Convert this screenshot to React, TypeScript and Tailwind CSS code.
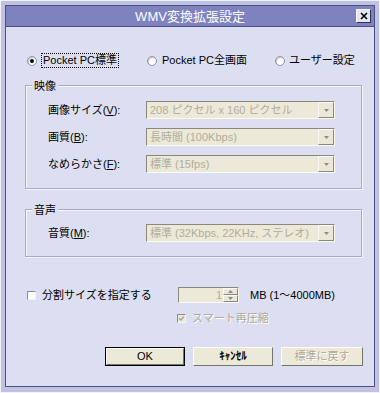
import React from "react";

const FONT = "font-['Liberation_Sans','Noto_Sans_CJK_JP',sans-serif]";

function Radio({ checked }: { checked?: boolean }) {
  return (
    <span className="flex h-[10px] w-[10px] shrink-0 items-center justify-center rounded-full border border-[#8d8fa6] bg-white shadow-[inset_1px_1px_1px_#c8c8d0]">
      {checked && <span className="h-[4px] w-[4px] rounded-full bg-black" />}
    </span>
  );
}

function Check({ disabled, checked }: { disabled?: boolean; checked?: boolean }) {
  return (
    <span
      className={`flex h-[9px] w-[9px] shrink-0 items-center justify-center border border-t-[#8a8a9a] border-l-[#8a8a9a] border-r-[#f4f4f8] border-b-[#f4f4f8] ${disabled ? "bg-[#ece9d8]" : "bg-white"}`}
    >
      {checked && (
        <svg width="7" height="7" viewBox="0 0 7 7">
          <path d="M1 3.2 L2.8 5 L6 1.5" fill="none" stroke="#a8a594" strokeWidth="1.4" />
        </svg>
      )}
    </span>
  );
}

function Arrow({ up, color = "#8e8c82" }: { up?: boolean; color?: string }) {
  return (
    <svg width="5" height="3" viewBox="0 0 5 3">
      <path d={up ? "M0 3 L2.5 0 L5 3 Z" : "M0 0 L5 0 L2.5 3 Z"} fill={color} />
    </svg>
  );
}

function Combo({ text }: { text: string }) {
  return (
    <div className="flex h-[18px] w-[189px] items-stretch border border-t-[#8a877c] border-l-[#8a877c] border-r-[#fbfaf4] border-b-[#fbfaf4] bg-[#ece9d8]">
      <div className="flex flex-1 items-center overflow-hidden whitespace-nowrap pl-[3px] text-[11px] text-[#b0ad9d]">{text}</div>
      <div className="flex w-[16px] items-center justify-center border border-t-[#fbfaf4] border-l-[#fbfaf4] border-r-[#8a877c] border-b-[#8a877c] bg-[#ebe8d9]">
        <Arrow />
      </div>
    </div>
  );
}

function Row({ label, mn, rest, value }: { label: string; mn: string; rest: string; value: string }) {
  return (
    <div className="flex items-center">
      <div className="w-[98px] whitespace-nowrap text-[11px] text-black">
        {label}(<u>{mn}</u>){rest}
      </div>
      <Combo text={value} />
    </div>
  );
}

function Group({ title, children, gap }: { title: string; children: React.ReactNode; gap: string }) {
  return (
    <div className="w-[337px] border border-[#a9abc5] shadow-[inset_1px_1px_0_#f6f7fc,1px_1px_0_#f6f7fc] pl-[22px]">
      <div className="-mt-[7px] -ml-[16px] w-fit bg-[#dcdff1] px-[2px] text-[11px] leading-[14px] text-black">{title}</div>
      <div className={`flex flex-col gap-[9px] ${gap}`}>{children}</div>
    </div>
  );
}

function Button({ children, def, disabled }: { children: React.ReactNode; def?: boolean; disabled?: boolean }) {
  return (
    <div className={`h-[19px] ${def ? "border border-black" : ""}`}>
      <div
        className={`flex h-full items-center justify-center border border-t-[#fdfcf6] border-l-[#fdfcf6] border-r-[#76746a] border-b-[#76746a] bg-[#ece9d8] text-[11px] ${disabled ? "text-[#aca899] [text-shadow:1px_1px_0_#fff]" : "text-black"}`}
      >
        {children}
      </div>
    </div>
  );
}

export default function App() {
  return (
    <div className={`${FONT} h-[393px] w-[380px] border border-[#f2f2f8] bg-[#bfc2e2] p-[4px]`}>
      <div className="flex h-[382px] w-[370px] flex-col border border-[#4d5080]">
        {/* title bar */}
        <div className="grid h-[21px] grid-cols-[1fr_auto_1fr] items-center border-b border-[#4d5080] bg-[#7e83bf]">
          <div />
          <div className="text-[13px] leading-none text-white">WMV変換拡張設定</div>
          <div className="flex justify-end pr-[3px]">
            <div className="flex h-[14px] w-[15px] items-center justify-center border border-t-[#f4f4fa] border-l-[#f4f4fa] border-r-[#303050] border-b-[#303050] bg-[#e4e6f4]">
              <svg width="8" height="8" viewBox="0 0 8 8">
                <path d="M1 1 L7 7 M7 1 L1 7" stroke="#000" strokeWidth="1.6" />
              </svg>
            </div>
          </div>
        </div>

        {/* body */}
        <div className="flex flex-1 flex-col bg-[#dcdff1] pl-[19px] pt-[26px]">
          <div className="ml-[2px] flex h-[15px] items-center text-[11px] text-black">
            <div className="flex w-[120px] items-center">
              <Radio checked />
              <span className="ml-[4px] border border-dotted border-black px-[1px] leading-[13px]">Pocket PC標準</span>
            </div>
            <div className="flex w-[128px] items-center">
              <Radio />
              <span className="ml-[5px]">Pocket PC全画面</span>
            </div>
            <div className="flex items-center">
              <Radio />
              <span className="ml-[4px]">ユーザー設定</span>
            </div>
          </div>

          <div className="mt-[17px]">
            <Group title="映像" gap="mt-[8px] pb-[15px]">
              <Row label="画像サイズ" mn="V" rest=":" value="208 ピクセル x 160 ピクセル" />
              <Row label="画質" mn="B" rest=":" value="長時間 (100Kbps)" />
              <Row label="なめらかさ" mn="F" rest=":" value="標準 (15fps)" />
            </Group>
          </div>

          <div className="mt-[20px]">
            <Group title="音声" gap="mt-[7px] pb-[14px]">
              <Row label="音質" mn="M" rest=":" value="標準 (32Kbps, 22KHz, ステレオ)" />
            </Group>
          </div>

          <div className="mt-[30px] flex h-[16px] items-center text-[11px] text-black">
            <div className="ml-[2px] flex w-[151px] items-center">
              <Check />
              <span className="ml-[6px]">分割サイズを指定する</span>
            </div>
            <div className="flex h-[16px] w-[61px] items-stretch border border-t-[#8a877c] border-l-[#8a877c] border-r-[#fbfaf4] border-b-[#fbfaf4] bg-[#ece9d8]">
              <div className="flex flex-1 items-center justify-end pr-[1px] text-[11px] text-[#b0ad9d]">1</div>
              <div className="flex w-[15px] flex-col">
                <div className="flex flex-1 items-center justify-center border border-t-[#fbfaf4] border-l-[#fbfaf4] border-r-[#8a877c] border-b-[#8a877c] bg-[#ebe8d9]">
                  <Arrow up />
                </div>
                <div className="flex flex-1 items-center justify-center border border-t-[#fbfaf4] border-l-[#fbfaf4] border-r-[#8a877c] border-b-[#8a877c] bg-[#ebe8d9]">
                  <Arrow />
                </div>
              </div>
            </div>
            <span className="ml-[11px] whitespace-nowrap">MB (1〜4000MB)</span>
          </div>

          <div className="ml-[152px] mt-[8px] flex h-[14px] items-center text-[11px]">
            <Check disabled checked />
            <span className="ml-[6px] text-[#aca899] [text-shadow:1px_1px_0_#fff]">スマート再圧縮</span>
          </div>

          <div className="ml-[80px] mt-[22px] flex gap-[8px]">
            <div className="w-[80px]">
              <Button def>OK</Button>
            </div>
            <div className="w-[80px]">
              <Button>
                <span className="font-semibold">ｷｬﾝｾﾙ</span>
              </Button>
            </div>
            <div className="w-[82px]">
              <Button disabled>標準に戻す</Button>
            </div>
          </div>
        </div>
      </div>
    </div>
  );
}
